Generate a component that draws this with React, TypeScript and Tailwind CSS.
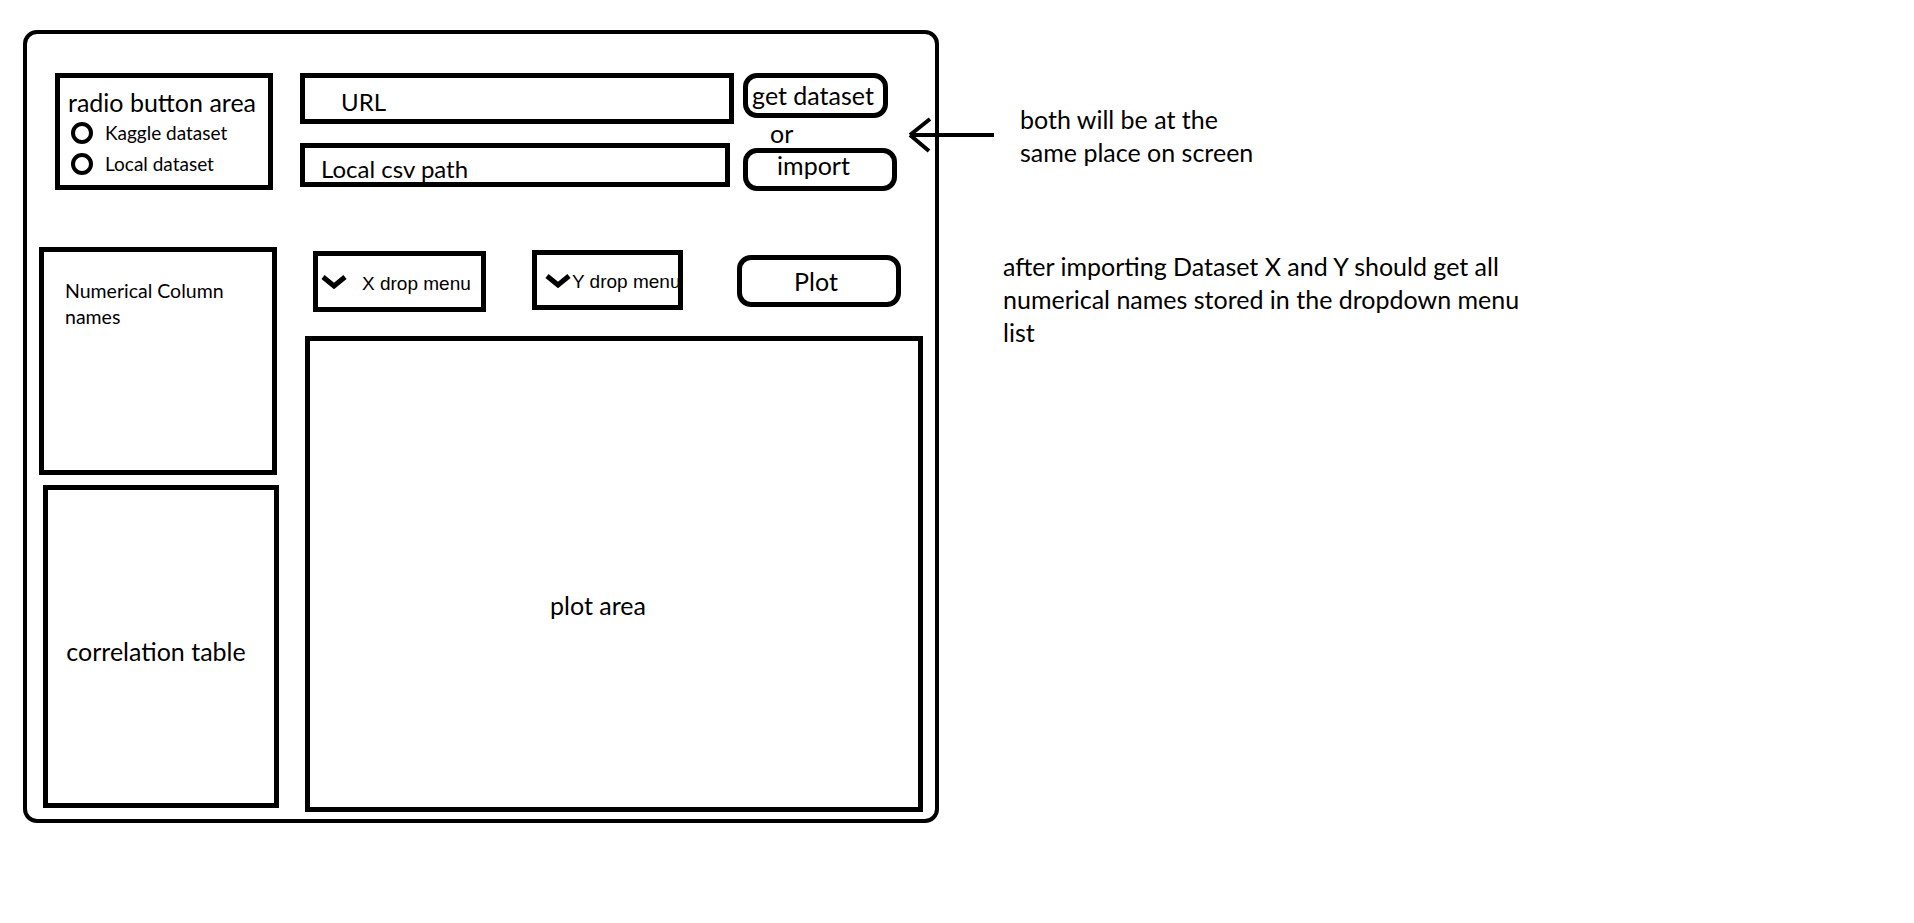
import { useState } from 'react';

const hand = "font-['Lato',sans-serif]";

function Chevron() {
  return (
    <svg width="26" height="15" viewBox="0 0 26 15" className="shrink-0">
      <polyline points="2,3 13,12 24,3" fill="none" stroke="black" strokeWidth="5" />
    </svg>
  );
}

function Radio({ label, checked, onClick }: { label: string; checked: boolean; onClick: () => void }) {
  return (
    <button onClick={onClick} className="flex items-center h-[31px] pl-[11px] gap-[12px] text-left">
      <span className="w-[22px] h-[22px] rounded-full border-[4px] border-black flex items-center justify-center">
        {checked && <span className="w-0 h-0" />}
      </span>
      <span className="text-[19px] leading-[31px]">{label}</span>
    </button>
  );
}

export default function App() {
  const [source, setSource] = useState<'kaggle' | 'local'>('kaggle');

  return (
    <div className={`relative w-[1914px] h-[923px] bg-white text-black flex items-start ${hand}`}>
      {/* app frame */}
      <div className="ml-[23px] mt-[30px] w-[916px] h-[793px] border-[4px] border-black rounded-[14px] shrink-0">
        {/* source row */}
        <div className="flex items-start mt-[39px] pl-[28px]">
          <div className="w-[218px] h-[117px] border-[5px] border-black">
            <div className="pl-[8px] pt-[9px] text-[25px] leading-[30px] whitespace-nowrap">radio button area</div>
            <Radio label="Kaggle dataset" checked={source === 'kaggle'} onClick={() => setSource('kaggle')} />
            <Radio label="Local dataset" checked={source === 'local'} onClick={() => setSource('local')} />
          </div>

          <div className="ml-[27px] flex flex-col">
            <div className="w-[434px] h-[51px] border-[5px] border-black flex items-center pl-[36px] pt-[6px] text-[24px] leading-none">
              URL
            </div>
            <div className="mt-[19px] w-[430px] h-[44px] border-[5px] border-black overflow-hidden pl-[16px] pt-[9px] text-[24px] leading-none">
              Local csv path
            </div>
          </div>

          <div className="ml-[9px] flex flex-col">
            <button className="w-[145px] h-[45px] border-[5px] border-black rounded-[14px] flex items-center justify-center pr-[5px] text-[25px] leading-none whitespace-nowrap">
              get dataset
            </button>
            <div className="h-[30px] pl-[27px] text-[25px] leading-[30px]">or</div>
            <button className="w-[154px] h-[43px] border-[5px] border-black rounded-[14px] flex items-center justify-center pr-[13px] pb-[9px] text-[25px] leading-none">
              import
            </button>
          </div>
        </div>

        {/* data row */}
        <div className="flex items-start mt-[56px] pl-[12px]">
          <div className="w-[240px] flex flex-col">
            <div className="w-[238px] h-[228px] border-[5px] border-black pl-[21px] pt-[26px] text-[19.5px] leading-[26px]">
              Numerical Column
              <br />
              names
            </div>
            <div className="ml-[4px] mt-[10px] w-[236px] h-[323px] border-[5px] border-black flex items-center justify-center pr-[10px] pt-[9px] text-[25px] leading-none">
              correlation table
            </div>
          </div>

          <div className="ml-[26px] flex flex-col">
            <div className="h-[89px] flex items-start">
              <div className="ml-[8px] mt-[4px] w-[173px] h-[61px] border-[5px] border-black flex items-center pl-[3px] gap-[15px]">
                <Chevron />
                <span className="font-['Liberation_Sans',sans-serif] text-[19px] leading-none pt-[3px]">X drop menu</span>
              </div>
              <div className="ml-[46px] mt-[3px] w-[151px] h-[60px] border-[5px] border-black flex items-center pl-[8px] gap-[1px] overflow-hidden">
                <Chevron />
                <span className="font-['Liberation_Sans',sans-serif] text-[19px] leading-none pt-[2px] whitespace-nowrap">Y drop menu</span>
              </div>
              <button className="ml-[54px] mt-[8px] w-[164px] h-[52px] border-[5px] border-black rounded-[14px] flex items-center justify-center pr-[6px] text-[25px] leading-none">
                Plot
              </button>
            </div>
            <div className="w-[618px] h-[476px] border-[5px] border-black flex items-center justify-center pr-[32px] pt-[62px] text-[25px] leading-none">
              plot area
            </div>
          </div>
        </div>
      </div>

      {/* notes */}
      <div className="ml-[64px] pt-[103px] text-[25px] leading-[33px] whitespace-nowrap">
        <div className="pl-[17px]">
          <div>both will be at the</div>
          <div>same place on screen</div>
        </div>
        <div className="mt-[81px]">
          <div>after importing Dataset X and Y should get all</div>
          <div>numerical names stored in the dropdown menu</div>
          <div>list</div>
        </div>
      </div>

      <svg className="absolute left-[906px] top-[114px]" width="92" height="42" viewBox="0 0 92 42">
        <path d="M4 21 L88 21 M4 21 L24 5 M4 21 L23 37" fill="none" stroke="black" strokeWidth="4" />
      </svg>
    </div>
  );
}
